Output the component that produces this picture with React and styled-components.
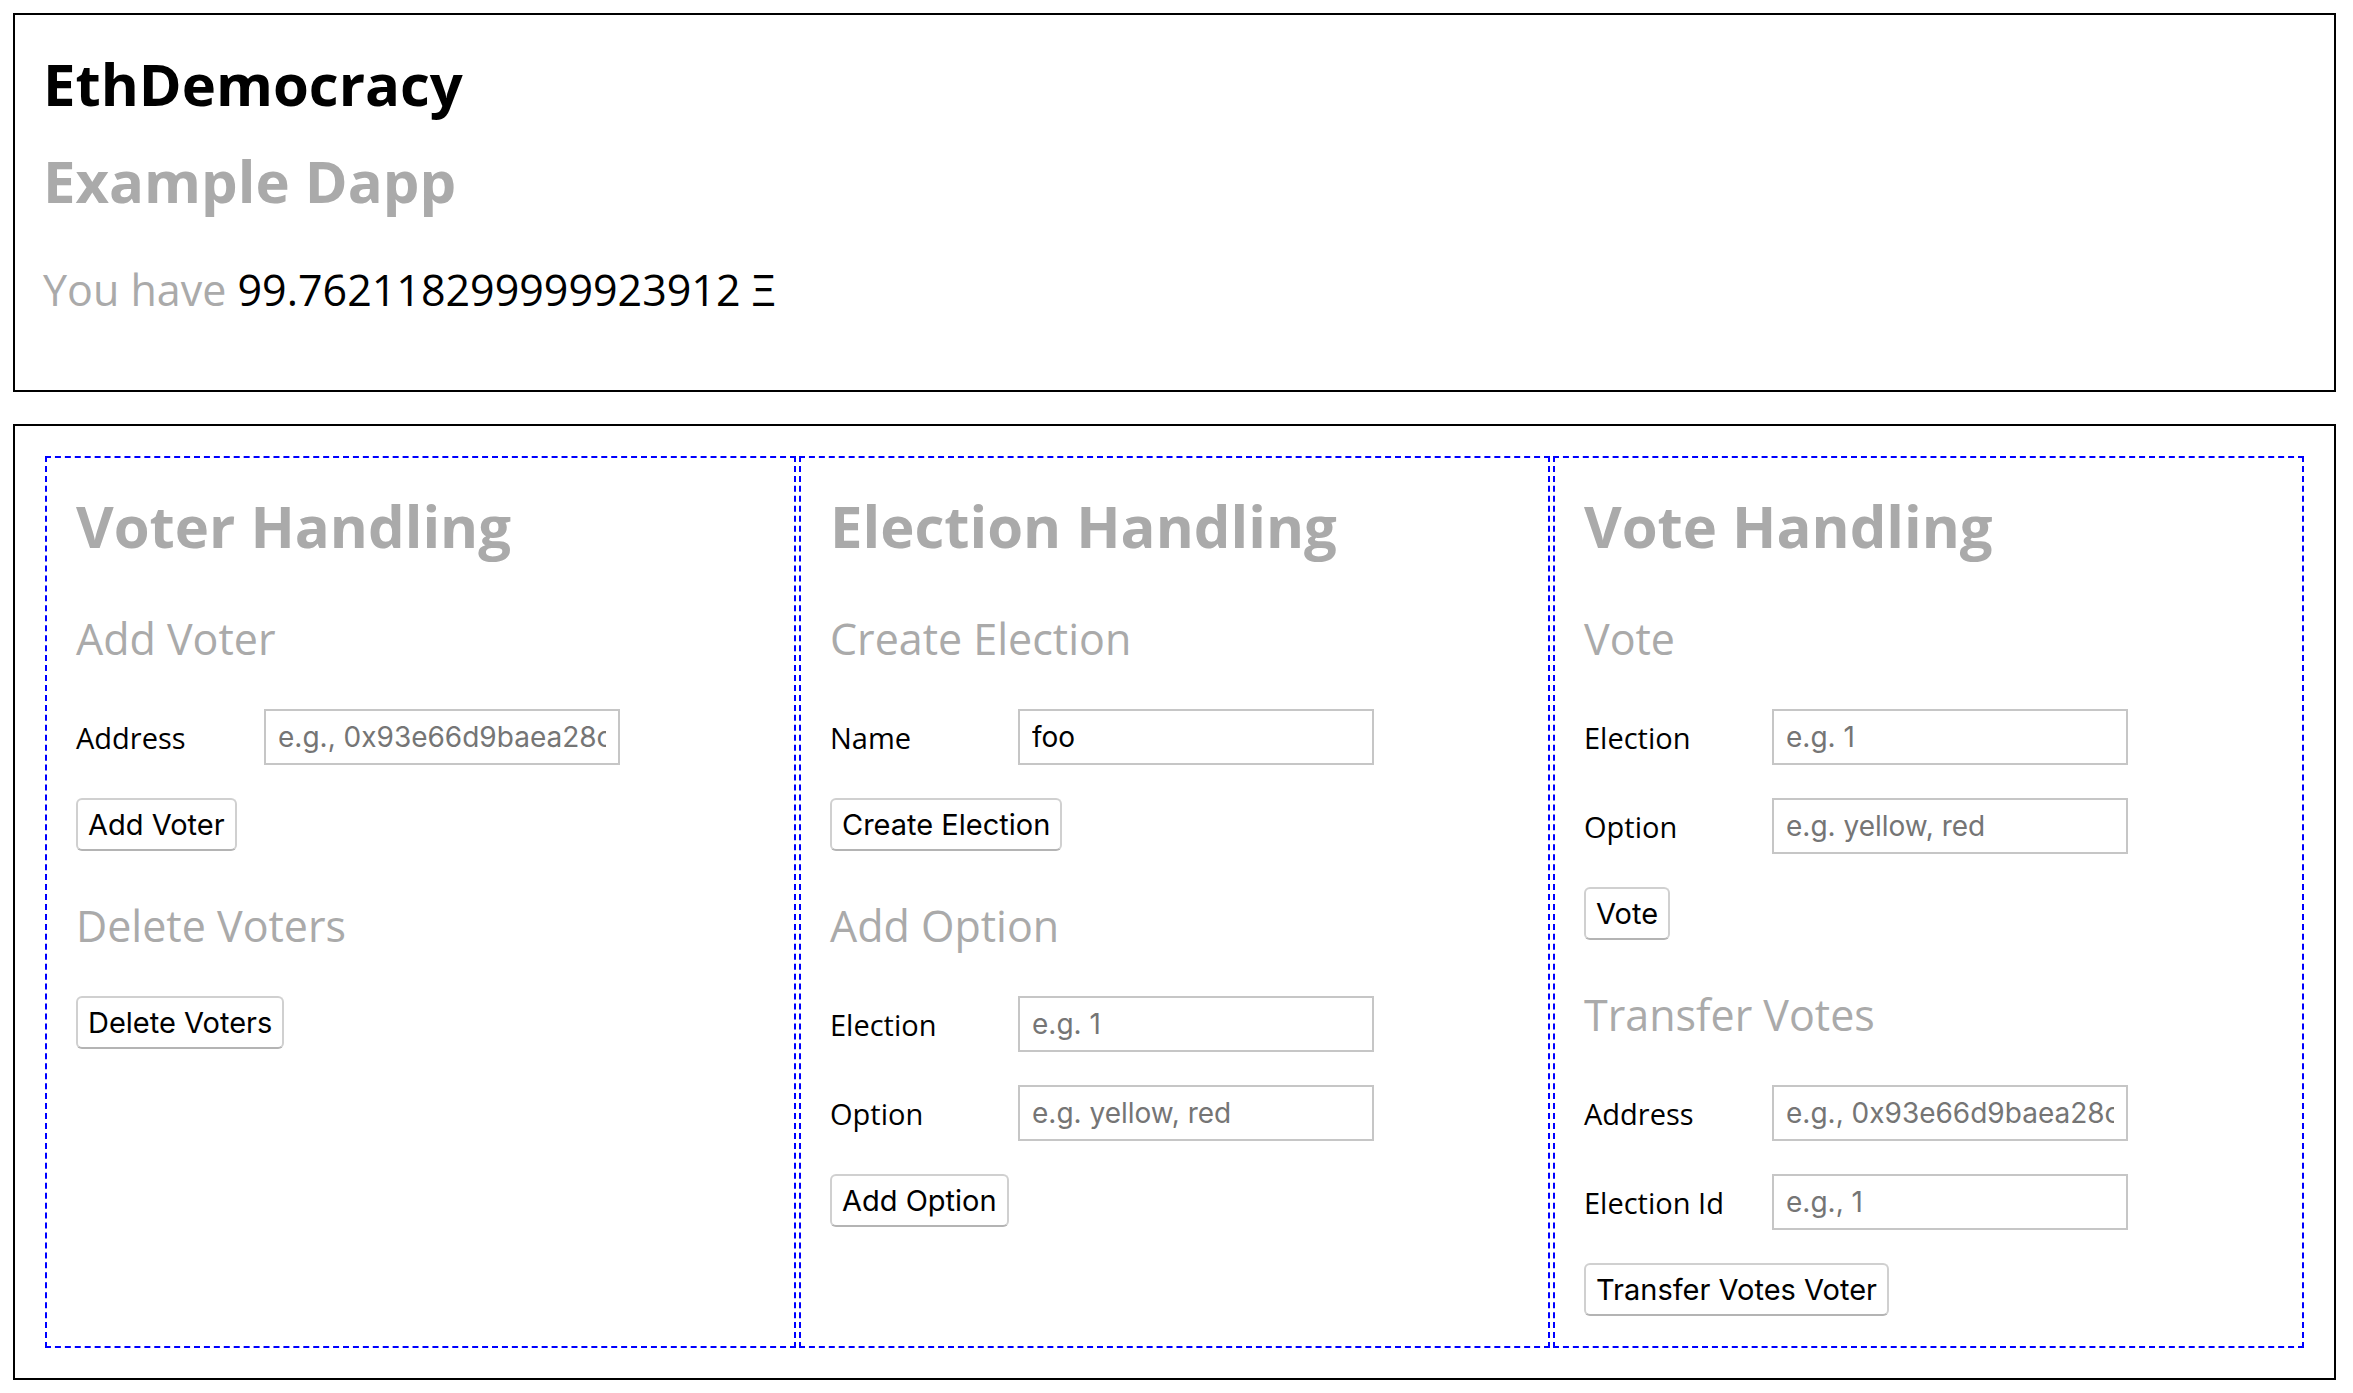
import React from 'react';
import styled, { createGlobalStyle } from 'styled-components';

const GlobalStyle = createGlobalStyle`
    body {
        margin: 0;
        background: #fff;
        font-family: 'Open Sans', 'DejaVu Sans', sans-serif;
    }
`;

const Page = styled.div`
    display: flex;
    flex-direction: column;
    gap: 32px;
    padding: 13px 17px 13px 13px;
`;

const Panel = styled.div`
    border: 2px solid #000;
`;

const Header = styled(Panel)`
    padding: 31px 28px 34px;
`;

const Title = styled.h1`
    margin: 0;
    font-size: 58px;
    line-height: 76px;
    font-weight: 700;
    color: ${(props) => (props.muted ? '#aaa' : '#000')};
    & + & {
        margin-top: 21px;
    }
`;

const Balance = styled.p`
    margin: 41px 0 36px;
    font-size: 43px;
    line-height: 60px;
    color: #aaa;
`;

const Amount = styled.span`
    color: #000;
`;

const Board = styled(Panel)`
    display: grid;
    grid-template-columns: repeat(3, 1fr);
    gap: 3px;
    padding: 30px;
`;

const Section = styled.div`
    display: flex;
    flex-direction: column;
    align-items: flex-start;
    padding: 30px 29px;
    border: 2px dashed #0000ff;
`;

const SectionTitle = styled.h2`
    margin: 0;
    font-size: 58px;
    line-height: 76px;
    font-weight: 700;
    color: #aaa;
`;

const Subtitle = styled.h3`
    margin: 45px 0 40px;
    font-size: 43px;
    line-height: 60px;
    font-weight: 400;
    color: #aaa;
`;

const Row = styled.div`
    display: flex;
    align-items: center;
    margin-bottom: 33px;
`;

const Label = styled.label`
    flex: none;
    width: 188px;
    font-size: 29px;
    color: #000;
`;

const Input = styled.input`
    box-sizing: border-box;
    width: 356px;
    height: 56px;
    padding: 0 12px;
    border: 2px solid #c6c6c6;
    border-radius: 0;
    font-family: Inter, 'Liberation Sans', sans-serif;
    font-size: 28px;
    color: #000;
    outline: none;

    ::placeholder {
        color: #737373;
    }
`;

const Button = styled.button`
    height: 53px;
    padding: 0 10px;
    background: #fff;
    border: 2px solid #d0d0d0;
    border-bottom-color: #b4b4b4;
    border-radius: 6px;
    font-family: Inter, 'Liberation Sans', sans-serif;
    font-size: 29px;
    color: #000;
    cursor: pointer;
`;

const ADDRESS = 'e.g., 0x93e66d9baea28c17d9fc393b53e3fbdd76899dae';

const Field = ({ label, placeholder, value }) => (
    <Row>
        <Label>{label}</Label>
        <Input placeholder={placeholder} defaultValue={value} />
    </Row>
);

const App = () => (
    <Page>
        <GlobalStyle />
        <Header>
            <Title>EthDemocracy</Title>
            <Title muted>Example Dapp</Title>
            <Balance>
                You have <Amount>99.762118299999923912 Ξ</Amount>
            </Balance>
        </Header>

        <Board>
            <Section>
                <SectionTitle>Voter Handling</SectionTitle>
                <Subtitle>Add Voter</Subtitle>
                <Field label="Address" placeholder={ADDRESS} />
                <Button>Add Voter</Button>
                <Subtitle>Delete Voters</Subtitle>
                <Button>Delete Voters</Button>
            </Section>

            <Section>
                <SectionTitle>Election Handling</SectionTitle>
                <Subtitle>Create Election</Subtitle>
                <Field label="Name" placeholder="e.g. Favourite colour" value="foo" />
                <Button>Create Election</Button>
                <Subtitle>Add Option</Subtitle>
                <Field label="Election" placeholder="e.g. 1" />
                <Field label="Option" placeholder="e.g. yellow, red" />
                <Button>Add Option</Button>
            </Section>

            <Section>
                <SectionTitle>Vote Handling</SectionTitle>
                <Subtitle>Vote</Subtitle>
                <Field label="Election" placeholder="e.g. 1" />
                <Field label="Option" placeholder="e.g. yellow, red" />
                <Button>Vote</Button>
                <Subtitle>Transfer Votes</Subtitle>
                <Field label="Address" placeholder={ADDRESS} />
                <Field label="Election Id" placeholder="e.g., 1" />
                <Button>Transfer Votes Voter</Button>
            </Section>
        </Board>
    </Page>
);

export default App;
